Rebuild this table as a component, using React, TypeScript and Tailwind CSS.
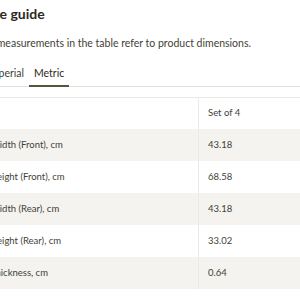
import React from 'react';

const rows = [
  { label: 'Width (Front), cm', value: '43.18' },
  { label: 'Height (Front), cm', value: '68.58' },
  { label: 'Width (Rear), cm', value: '43.18' },
  { label: 'Height (Rear), cm', value: '33.02' },
  { label: 'Thickness, cm', value: '0.64' },
];

export default function App() {
  return (
    <div className="w-[300px] h-[300px] overflow-hidden bg-white font-['Lato',sans-serif] text-[#3b3b33]">
      <div className="-ml-[18px] w-[340px] pt-[4px]">
        {/* Title */}
        <h2 className="text-[14px] font-bold leading-[20px] text-[#2a2a20]">Size guide</h2>
        <p className="mt-[11px] text-[10.5px] leading-[16px] text-[#3f3f37]">
          All measurements in the table refer to product dimensions.
        </p>

        {/* Tabs */}
        <div className="mt-[14px] flex border-b border-[#e4e4df]">
          <button className="px-[5px] pb-[4px] text-[10.5px] leading-[16px] text-[#3f3f37] border-b-2 border-transparent -mb-px">
            Imperial
          </button>
          <button className="px-[5px] pb-[4px] text-[10.5px] leading-[16px] text-[#2a2a20] border-b-2 border-[#55553f] -mb-px">
            Metric
          </button>
        </div>

        {/* Table */}
        <div className="mt-[10px] border-t border-[#ebebe6] text-[9.5px] text-[#3f3f37]">
          <div className="flex h-[31px] items-center">
            <div className="w-[217px] h-full border-r border-[#ebebe6]" />
            <div className="pl-[9px]">Set of 4</div>
          </div>
          {rows.map((r, i) => (
            <div key={i} className={`flex h-[32px] items-center ${i % 2 === 0 ? 'bg-[#f4f3ef]' : 'bg-white'}`}>
              <div className="w-[217px] h-full flex items-center pl-[8px] border-r border-[#ebebe6]">{r.label}</div>
              <div className="pl-[9px]">{r.value}</div>
            </div>
          ))}
        </div>
      </div>
    </div>
  );
}
